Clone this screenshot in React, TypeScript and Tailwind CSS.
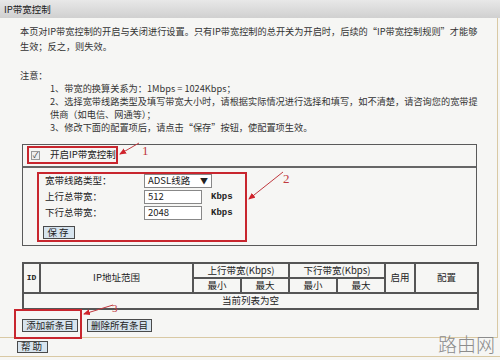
const cell = "border-2 border-[#555] text-center align-middle p-0";
const btn =
  "flex items-center justify-center border border-[#4a4a4a] bg-[#d7e4ee] text-[9.5px] leading-none text-[#222] whitespace-nowrap";

function Arrows() {
  return (
    <svg className="pointer-events-none absolute left-0 top-0" width="500" height="360" viewBox="0 0 500 360">
      <defs>
        <marker id="ah" markerWidth="7" markerHeight="6" refX="6" refY="3" orient="auto" markerUnits="userSpaceOnUse">
          <path d="M0,0 L7,3 L0,6 z" fill="#d0232b" />
        </marker>
      </defs>
      <line x1="139" y1="143" x2="120" y2="154" stroke="#c0393f" strokeWidth="1" markerEnd="url(#ah)" />
      <line x1="283" y1="172" x2="249" y2="199" stroke="#c0393f" strokeWidth="1" markerEnd="url(#ah)" />
      <line x1="113" y1="305" x2="84" y2="314" stroke="#c0393f" strokeWidth="1" markerEnd="url(#ah)" />
    </svg>
  );
}

export default function App() {
  return (
    <div className="relative h-[360px] w-[500px] overflow-hidden bg-[#f6f6f4] font-['Noto_Sans_CJK_SC',sans-serif] text-[#333]">
      <div className="h-[18px] bg-gradient-to-b from-[#e8e8e8] to-[#d0d0d0] pl-[4px] text-[9.5px] leading-[18px] text-[#222]">
        IP带宽控制
      </div>

      <div className="h-[320px] w-[498px] border-r border-b border-[#d9c9a4]">
        <div className="pl-[20px] pt-[6px] text-[9.2px] leading-[15px] whitespace-nowrap">
          <p>本页对IP带宽控制的开启与关闭进行设置。只有IP带宽控制的总开关为开启时，后续的“IP带宽控制规则”才能够</p>
          <p>生效；反之，则失效。</p>
        </div>

        <div className="mt-[15px] pl-[20px] text-[9.2px] leading-[13px]">
          <p>注意：</p>
          <div className="pl-[30px] whitespace-nowrap">
            <p>1、带宽的换算关系为：1Mbps = 1024Kbps；</p>
            <p>2、选择宽带线路类型及填写带宽大小时，请根据实际情况进行选择和填写，如不清楚，请咨询您的宽带提</p>
            <p>供商（如电信、网通等）；</p>
            <p>3、修改下面的配置项后，请点击“保存”按钮，使配置项生效。</p>
          </div>
        </div>

        <div className="ml-[22px] mt-[10px] w-[455px] border border-[#5a5a5a]">
          <div className="h-[22px] border-b-2 border-[#666]">
            <div className="ml-[4px] mt-[1px] flex h-[18px] w-[91px] items-center whitespace-nowrap border-2 border-[#c8262e] pl-[2px]">
              <span className="flex h-[9px] w-[9px] items-center justify-center border border-[#999] bg-[#eee] text-[8px] leading-none text-[#333]">
                ✓
              </span>
              <span className="ml-[10px] text-[9.5px] leading-none text-[#222]">开启IP带宽控制</span>
            </div>
          </div>
          <div className="h-[77px] pl-[14px] pt-[4px]">
            <div className="h-[70px] w-[210px] border-2 border-[#c8262e] pl-[2px] text-[9.5px] leading-none text-[#222] whitespace-nowrap">
              <div className="flex h-[14px] items-center pl-[4px]">
                <span className="w-[99px]">宽带线路类型：</span>
                <div className="flex h-[14px] w-[68px] items-center justify-between border border-[#888] bg-white px-[3px]">
                  <span>ADSL线路</span>
                  <span className="text-[8px]">▼</span>
                </div>
              </div>
              <div className="mt-[2px] flex h-[14px] items-center pl-[4px]">
                <span className="w-[99px]">上行总带宽：</span>
                <div className="flex h-[14px] w-[58px] items-center border border-[#888] bg-white px-[3px]">512</div>
                <span className="ml-[9px] font-['Liberation_Mono',monospace] text-[9px] font-bold">Kbps</span>
              </div>
              <div className="mt-[2px] flex h-[14px] items-center pl-[4px]">
                <span className="w-[99px]">下行总带宽：</span>
                <div className="flex h-[14px] w-[58px] items-center border border-[#888] bg-white px-[3px]">2048</div>
                <span className="ml-[9px] font-['Liberation_Mono',monospace] text-[9px] font-bold">Kbps</span>
              </div>
              <div className={`${btn} ml-[2px] mt-[6px] h-[13px] w-[32px] tracking-[2px]`}>保存</div>
            </div>
          </div>
        </div>

        <table className="ml-[22px] mt-[16px] w-[455px] table-fixed border-collapse border-2 border-[#555] text-[9.5px] leading-none text-[#222] whitespace-nowrap">
          <colgroup>
            <col className="w-[17px]" />
            <col className="w-[153px]" />
            <col className="w-[48px]" />
            <col className="w-[48px]" />
            <col className="w-[48px]" />
            <col className="w-[48px]" />
            <col className="w-[30px]" />
            <col className="w-[63px]" />
          </colgroup>
          <tbody>
            <tr className="h-[15px]">
              <td rowSpan={2} className={`${cell} font-['Liberation_Mono',monospace] text-[8px] font-bold`}>
                ID
              </td>
              <td rowSpan={2} className={cell}>IP地址范围</td>
              <td colSpan={2} className={cell}>上行带宽(Kbps)</td>
              <td colSpan={2} className={cell}>下行带宽(Kbps)</td>
              <td rowSpan={2} className={cell}>启用</td>
              <td rowSpan={2} className={cell}>配置</td>
            </tr>
            <tr className="h-[15px]">
              <td className={cell}>最小</td>
              <td className={cell}>最大</td>
              <td className={cell}>最小</td>
              <td className={cell}>最大</td>
            </tr>
            <tr className="h-[16px]">
              <td colSpan={8} className={cell}>当前列表为空</td>
            </tr>
          </tbody>
        </table>

        <div className="-mt-[1px] flex">
          <div className="ml-[14px] h-[30px] w-[68px] border-2 border-[#c8262e] pl-[6px] pt-[8px]">
            <div className={`${btn} h-[13px] w-[56px]`}>添加新条目</div>
          </div>
          <div className={`${btn} ml-[5px] mt-[10px] h-[13px] w-[65px]`}>删除所有条目</div>
        </div>
      </div>

      <div className="h-[19px] border-b border-[#d9c9a4] pl-[17px] pt-[3px]">
        <div className={`${btn} h-[12px] w-[31px] tracking-[2px]`}>帮助</div>
      </div>

      <span className="absolute left-[438px] top-[334px] text-[19px] font-light leading-none text-[#8c8c8c]">路由网</span>

      <span className="absolute left-[142px] top-[144px] font-['Liberation_Serif',serif] text-[13px] leading-none text-[#c0393f]">1</span>
      <span className="absolute left-[283px] top-[172px] font-['Liberation_Serif',serif] text-[13px] leading-none text-[#c0393f]">2</span>
      <span className="absolute left-[112px] top-[303px] font-['Liberation_Serif',serif] text-[11px] leading-none text-[#c0393f]">3</span>

      <Arrows />
    </div>
  );
}
